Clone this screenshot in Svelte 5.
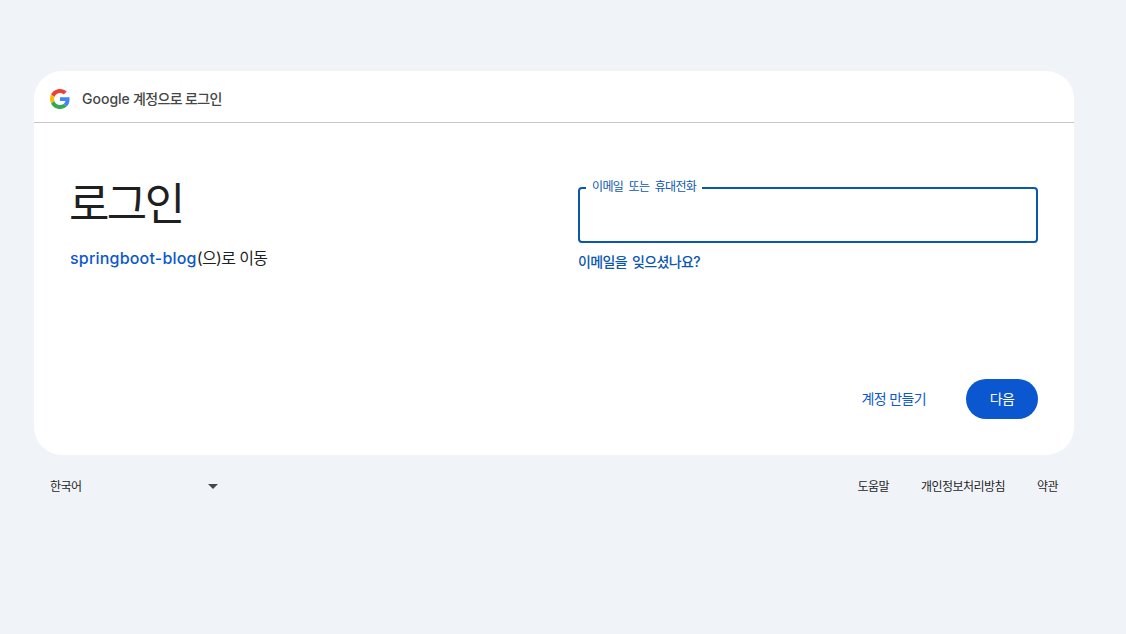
<script>
  const footerLinks = ["도움말", "개인정보처리방침", "약관"];
</script>

<div class="page">
  <main class="card">
    <header class="card-head">
      <svg class="g-logo" viewBox="0 0 48 48" aria-hidden="true">
        <path fill="#EA4335" d="M24 9.5c3.54 0 6.71 1.22 9.21 3.6l6.85-6.85C35.9 2.38 30.47 0 24 0 14.62 0 6.51 5.38 2.56 13.22l7.98 6.19C12.43 13.72 17.74 9.5 24 9.5z"/>
        <path fill="#4285F4" d="M46.98 24.55c0-1.57-.15-3.09-.38-4.55H24v9.02h12.94c-.58 2.96-2.26 5.48-4.78 7.18l7.73 6c4.51-4.18 7.09-10.36 7.09-17.65z"/>
        <path fill="#FBBC05" d="M10.53 28.59c-.48-1.45-.76-2.99-.76-4.59s.27-3.14.76-4.59l-7.98-6.19C.92 16.46 0 20.12 0 24c0 3.88.92 7.54 2.56 10.78l7.97-6.19z"/>
        <path fill="#34A853" d="M24 48c6.48 0 11.93-2.13 15.89-5.81l-7.73-6c-2.15 1.45-4.92 2.3-8.16 2.3-6.26 0-11.57-4.22-13.47-9.91l-7.98 6.19C6.51 42.62 14.62 48 24 48z"/>
      </svg>
      <span class="head-text"><span class="latin">Google</span> 계정으로 로그인</span>
    </header>

    <div class="card-body">
      <section class="intro">
        <h1>로그인</h1>
        <p><a class="latin" href="#top">springboot-blog</a>(으)로 이동</p>
      </section>

      <section class="form">
        <div class="field">
          <span class="field-label">이메일 또는 휴대전화</span>
        </div>
        <a class="forgot" href="#top">이메일을 잊으셨나요?</a>
      </section>
    </div>

    <div class="actions">
      <a class="create" href="#top">계정 만들기</a>
      <button class="next" type="button">다음</button>
    </div>
  </main>

  <footer class="foot">
    <div class="lang">
      <span>한국어</span>
      <span class="caret"></span>
    </div>
    <nav class="links">
      {#each footerLinks as link}
        <a href="#top">{link}</a>
      {/each}
    </nav>
  </footer>
</div>

<style>
  :global(body) {
    background: #f0f4f9;
    font-family: Inter, "Noto Sans CJK KR", sans-serif;
    color: #1f1f1f;
    letter-spacing: -0.04em;
  }

  .page {
    width: 1040px;
    height: 563px;
    padding: 71px 0 0 34px;
  }

  a {
    text-decoration: none;
    color: #0b57d0;
  }

  .latin {
    letter-spacing: 0;
  }

  .card {
    background: #fff;
    border-radius: 28px;
    height: 384px;
    display: flex;
    flex-direction: column;
  }

  .card-head {
    height: 51px;
    border-bottom: 1px solid #c7c7c7;
    display: flex;
    align-items: center;
    padding-left: 16px;
    gap: 12px;
    flex: none;
  }

  .g-logo {
    width: 20px;
    height: 20px;
    margin-top: 5px;
  }

  .head-text {
    font-size: 14px;
    color: #444746;
    font-weight: 500;
    padding-top: 2px;
    letter-spacing: -0.045em;
  }

  .card-body {
    flex: 1;
    display: grid;
    grid-template-columns: 508px 460px;
    padding: 0 36px;
  }

  .intro {
    padding-top: 49px;
  }

  h1 {
    margin: 0 0 0 -1px;
    font-size: 44px;
    font-weight: 400;
    line-height: 64px;
    letter-spacing: -0.06em;
  }

  .intro p {
    margin: 10px 0 0;
    font-size: 16px;
    line-height: 24px;
  }

  .intro p a {
    font-weight: 500;
    letter-spacing: 0.2px;
  }

  .form {
    padding-top: 64px;
  }

  .field {
    height: 52px;
    border: 2px solid #0b57b0;
    border-radius: 4px;
    position: relative;
  }

  .field-label {
    position: absolute;
    left: 6px;
    top: -10px;
    padding: 0 6px;
    background: #fff;
    color: #0b57b0;
    font-size: 12px;
    line-height: 16px;
    word-spacing: 2.6px;
  }

  .forgot {
    display: block;
    margin-top: 9px;
    font-size: 14px;
    line-height: 20px;
    font-weight: 500;
    word-spacing: 2px;
    color: #0b57b0;
  }

  .actions {
    display: flex;
    justify-content: flex-end;
    align-items: center;
    gap: 16px;
    padding: 0 36px 36px;
    flex: none;
  }

  .create {
    font-size: 14px;
    padding: 0 24px 2px;
  }

  .next {
    width: 72px;
    height: 40px;
    padding: 0 0 2px;
    border: 0;
    border-radius: 20px;
    background: #0b57d0;
    color: #fff;
    font: 400 14px Inter, "Noto Sans CJK KR", sans-serif;
    letter-spacing: -0.04em;
  }

  .foot {
    display: flex;
    justify-content: space-between;
    align-items: center;
    height: 16px;
    margin-top: 22px;
    padding: 0 16px;
    font-size: 12px;
    letter-spacing: -0.045em;
  }

  .lang {
    width: 168px;
    display: flex;
    justify-content: space-between;
    align-items: center;
  }

  .caret {
    width: 0;
    height: 0;
    border-left: 5px solid transparent;
    border-right: 5px solid transparent;
    border-top: 5px solid #444746;
    margin: 2px 0 0 0;
  }

  .links {
    display: flex;
    gap: 32px;
  }

  .links a {
    color: #1f1f1f;
  }
</style>
